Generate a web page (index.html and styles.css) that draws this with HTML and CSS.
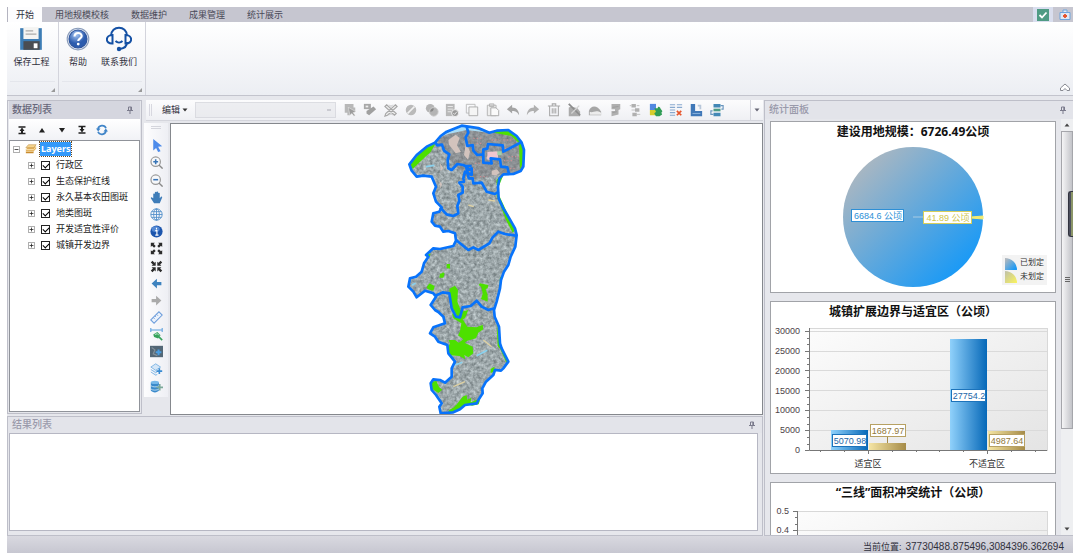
FILE: index.html
```html
<!DOCTYPE html>
<html lang="zh-CN">
<head>
<meta charset="utf-8">
<title>用地规模校核</title>
<link rel="stylesheet" href="styles.css">
</head>
<body>
<div class="app">
  <header class="ribbon">
    <nav class="tabs">
      <button class="tab tab-active">开始</button>
      <button class="tab">用地规模校核</button>
      <button class="tab">数据维护</button>
      <button class="tab">成果管理</button>
      <button class="tab">统计展示</button>
      <span class="spacer"></span>
      <button class="tab-icon tab-icon-on" aria-label="确认"><svg viewBox="0 0 12 12"><rect width="12" height="12" fill="#4f9b84"/><path d="M2.500 6l2.500 2.500 4.500-5" fill="none" stroke="#fff" stroke-width="1.800"/></svg></button>
      <button class="tab-icon" aria-label="工具箱"><svg viewBox="0 0 12 12"><path d="M1 3.500h10v7H1zM4 3.500V1h4v2.500" fill="#dfe8f4" stroke="#6fa5dc"/><path d="M6 5v4M4 7h4" stroke="#e4532d" stroke-width="1.800"/></svg></button>
    </nav>
    <div class="ribbon-body">
      <section class="group">
        <div class="group-items">
          <button class="big"><svg viewBox="0 0 24 24"><path d="M2 2h20v20H2z" fill="#3d7db5"/><path d="M5 1h14v11H5z" fill="#f4f4f2"/><path d="M7 4.500h7M7 7.500h10" stroke="#aaa"/><path d="M5 14h15v8H5z" fill="#4a4d52"/><path d="M14.500 16h3.500v4.500h-3.500z" fill="#fff"/></svg>保存工程</button>
        </div>
        <div class="group-foot"></div>
      </section>
      <section class="group">
        <div class="group-items">
          <button class="big"><svg viewBox="0 0 24 24"><defs><radialGradient id="help" cx=".4" cy=".25"><stop offset="0" stop-color="#a9c8f4"/><stop offset="1" stop-color="#2c5cae"/></radialGradient></defs><circle cx="12" cy="12" r="10" fill="#e3e9f4" stroke="#8a9cba"/><circle cx="12" cy="12" r="8.300" fill="url(#help)" stroke="#2b529b"/><path d="M8.800 9.800c0-4.500 6.600-4.300 6.600-.5 0 2.300-3.200 2.400-3.200 4.500" fill="none" stroke="#fff" stroke-width="2"/><circle cx="12.200" cy="16.700" r="1.300" fill="#fff"/></svg>帮助</button>
          <button class="big"><svg viewBox="0 0 26 26"><path d="M5 10c0-11 16-11 16 0M21 16c0 4-3 6.500-7 7M9.500 15c2 2 5 2 7 0" fill="none" stroke="#1450a4" stroke-width="2"/><path d="M6.500 9v8.500C-1 18-1 9 6.500 9zM19.500 9v8.500c7.500.5 7.500-8.500 0-8.500z" fill="none" stroke="#1450a4" stroke-width="2"/><circle cx="13" cy="23" r="2.200" fill="#1450a4"/></svg>联系我们</button>
        </div>
        <div class="group-foot"></div>
      </section>
      <button class="collapse" aria-label="折叠"><svg viewBox="0 0 12 10"><path d="M1.500 6L6 2l4.500 4v2.500H8L6 6.500 4 8.500H1.500z" fill="#fff" stroke="#888a92"/></svg></button>
    </div>
  </header>

  <main class="work">
    <div class="left-area">
      <section class="panel data-panel">
        <header class="panel-head strong"><h2>数据列表</h2><button class="pin" aria-label="固定"><svg viewBox="0 0 8 8"><path d="M2.500 1h3v3.500h-3zM1 4.500h6M4 5v3" fill="none" stroke="#7b7b8c"/><path d="M4.800 1v3.500" stroke="#7b7b8c"/></svg></button></header>
        <div class="tree-tools">
          <button aria-label="置顶"><svg viewBox="0 0 12 12"><path d="M2.500 3h7M2.500 9.500h7" stroke="#222" stroke-width="1.300"/><path d="M6 3.500l2.500 3.500H7v2H5V7H3.500z" fill="#222"/></svg></button>
          <button aria-label="上移"><svg viewBox="0 0 12 12"><path d="M6 4L9 8.500H3z" fill="#222"/></svg></button>
          <button aria-label="下移"><svg viewBox="0 0 12 12"><path d="M6 8.500L3 4h6z" fill="#222"/></svg></button>
          <button aria-label="置底"><svg viewBox="0 0 12 12"><path d="M2.500 2.500h7M2.500 9h7" stroke="#222" stroke-width="1.300"/><path d="M6 8.500L8.500 5H7V3H5v2H3.500z" fill="#222"/></svg></button>
          <button aria-label="刷新"><svg viewBox="0 0 12 12"><path d="M2 5c.8-4 6.500-4.500 8-.8M10 7c-.8 4-6.500 4.500-8 .8" fill="none" stroke="#3f84c8" stroke-width="1.700"/><path d="M0 4.500h4.500L2.200 7.500zM12 7.500H7.500L9.800 4.500z" fill="#3f84c8"/></svg></button>
        </div>
        <ul class="tree">
          <li class="node root"><button class="toggle" aria-label="收起"><svg viewBox="0 0 9 9"><path d="M.5.5h8v8h-8z" fill="#fff" stroke="#8b8b8b"/><path d="M2 4.500h5" stroke="#222"/></svg></button><svg class="layers" viewBox="0 0 14 12"><path d="M1 9l3-3.500h9L10 9v2H1z" fill="#c98b2f"/><path d="M1 6.500L4 3h9v2l-3 3.500H1z" fill="#e4b25c"/><path d="M1 4.500L4 1h9L10 4.500z" fill="#f6d58e" stroke="#b98739" stroke-width=".6"/><path d="M1 6.600h9l3-3.300M1 8.800h9l3-3.300" stroke="#fff3d2" stroke-width=".7" fill="none"/></svg><span class="selected">Layers</span></li>
          <li class="node"><button class="toggle" aria-label="展开"><svg viewBox="0 0 9 9"><path d="M.5.5h8v8h-8z" fill="#fff" stroke="#8b8b8b"/><path d="M2 4.500h5M4.500 2v5" stroke="#222"/></svg></button><label><input type="checkbox" checked>行政区</label></li>
          <li class="node"><button class="toggle" aria-label="展开"><svg viewBox="0 0 9 9"><path d="M.5.5h8v8h-8z" fill="#fff" stroke="#8b8b8b"/><path d="M2 4.500h5M4.500 2v5" stroke="#222"/></svg></button><label><input type="checkbox" checked>生态保护红线</label></li>
          <li class="node"><button class="toggle" aria-label="展开"><svg viewBox="0 0 9 9"><path d="M.5.5h8v8h-8z" fill="#fff" stroke="#8b8b8b"/><path d="M2 4.500h5M4.500 2v5" stroke="#222"/></svg></button><label><input type="checkbox" checked>永久基本农田图斑</label></li>
          <li class="node"><button class="toggle" aria-label="展开"><svg viewBox="0 0 9 9"><path d="M.5.5h8v8h-8z" fill="#fff" stroke="#8b8b8b"/><path d="M2 4.500h5M4.500 2v5" stroke="#222"/></svg></button><label><input type="checkbox" checked>地类图斑</label></li>
          <li class="node"><button class="toggle" aria-label="展开"><svg viewBox="0 0 9 9"><path d="M.5.5h8v8h-8z" fill="#fff" stroke="#8b8b8b"/><path d="M2 4.500h5M4.500 2v5" stroke="#222"/></svg></button><label><input type="checkbox" checked>开发适宜性评价</label></li>
          <li class="node"><button class="toggle" aria-label="展开"><svg viewBox="0 0 9 9"><path d="M.5.5h8v8h-8z" fill="#fff" stroke="#8b8b8b"/><path d="M2 4.500h5M4.500 2v5" stroke="#222"/></svg></button><label><input type="checkbox" checked>城镇开发边界</label></li>
        </ul>
      </section>

      <section class="editor">
        <div class="edit-bar">
          <span class="grip-v"></span>
          <button class="edit-menu">编辑<svg viewBox="0 0 6 4"><path d="M.5.5h5L3 3.500z" fill="#333"/></svg></button>
          <select class="target" disabled aria-label="编辑图层"><option></option></select>
          <div class="edit-icons">
            <button aria-label="选择"><svg viewBox="0 0 16 16"><path d="M2 1h10v4h2v5H8v4H5v-3H2z" fill="#b8b8b8"/><path d="M6 5l9 5-3.500 1 2.500 3-1.500 1-2.300-3L8 14z" fill="#9c9c9c" stroke="#f5f5f5" stroke-width=".5"/></svg></button>
            <button aria-label="标注"><svg viewBox="0 0 16 16"><path d="M1 1h8v6H1z" fill="#a8a8a8"/><path d="M3 3h3v2H3z" fill="#eee"/><path d="M4 9l8-5 3 3-8 7-3-2z" fill="#a0a0a0"/></svg></button>
            <button aria-label="编辑工具"><svg viewBox="0 0 16 16"><path d="M3 2l11 10-2 2L1 4zM13 2l2 2L4 14l-3 1 1-3z" fill="#eee" stroke="#a8a8a8" stroke-width="1.300"/><path d="M6 2l2 2 2-2M6 14l2-2 2 2" fill="none" stroke="#b4b4b4"/></svg></button>
            <button aria-label="裁剪"><svg viewBox="0 0 16 16"><circle cx="8" cy="8" r="6" fill="#bababa"/><path d="M4 12l8-8" stroke="#f2f2f2" stroke-width="2"/></svg></button>
            <button aria-label="合并"><svg viewBox="0 0 16 16"><circle cx="6" cy="6" r="5" fill="#b4b4b4"/><circle cx="10" cy="10" r="5" fill="#b4b4b4" stroke="#ccc"/><path d="M6 10a4 4 0 0 1 4-4 4 4 0 0 1-4 4z" fill="#888"/></svg></button>
            <button aria-label="属性"><svg viewBox="0 0 16 16"><path d="M1 1h10v14H1z" fill="#b8b8b8"/><path d="M3 4h6M3 7h6M3 10h4" stroke="#eee"/><circle cx="11.500" cy="11.500" r="4" fill="#999" stroke="#f3f3f3"/><path d="M9.500 11.500l1.500 1.500 2.500-3" fill="none" stroke="#eee"/></svg></button>
            <button aria-label="复制"><svg viewBox="0 0 16 16"><path d="M1.500 1.500h10v10h-10z" fill="none" stroke="#b8b8b8"/><path d="M4.500 4.500h10v10h-10z" fill="#f5f5f5" stroke="#a8a8a8"/></svg></button>
            <button aria-label="粘贴"><svg viewBox="0 0 16 16"><path d="M1.500 2.500h10v12h-10zM4 1h5v3H4z" fill="#eee" stroke="#b0b0b0"/><path d="M5.500 5.500h6l3 3v6h-9z" fill="#fafafa" stroke="#a4a4a4"/></svg></button>
            <button aria-label="撤销"><svg viewBox="0 0 16 16"><path d="M1 7l6-5v3c5 0 8 4 8 9-2-4-4-5-8-5v3z" fill="#a4a4a4"/></svg></button>
            <button aria-label="重做"><svg viewBox="0 0 16 16"><path d="M15 7L9 2v3c-5 0-8 4-8 9 2-4 4-5 8-5v3z" fill="#b0b0b0"/></svg></button>
            <button aria-label="删除"><svg viewBox="0 0 16 16"><path d="M1 3.500h14M6 3V1h4v2M3 4v10.500h10V4M6 6v6M8 6v6M10 6v6" fill="none" stroke="#a8a8a8" stroke-width="1.200"/></svg></button>
            <button aria-label="停止编辑"><svg viewBox="0 0 16 16"><path d="M2 15V5l3-1 7 2 3 4v5z" fill="#ababab"/><path d="M2 1l13 13" stroke="#8d8d8d" stroke-width="2"/><path d="M14 3L5 12" stroke="#d4d4d4" stroke-width="1.500"/></svg></button>
            <button aria-label="分割"><svg viewBox="0 0 16 16"><path d="M1 9c2-7 10-7 14 1v4H1z" fill="#a6a6a6"/><path d="M2 10c4 2 6-3 13 1v2.500H2z" fill="#ececec"/></svg></button>
            <button aria-label="修整"><svg viewBox="0 0 16 16"><path d="M4 1h10v6l-2 1v5l-8 2V9h4V7H4z" fill="#b0b0b0"/><path d="M5 5l7-1M5 11l5-1" stroke="#999"/></svg></button>
            <button aria-label="拓扑"><svg viewBox="0 0 16 16"><path d="M4 1h5v4H4zM8 6h5v4H8zM5 11h5v4H5z" fill="#b0b0b0"/><path d="M2 3h2M4 8h4M10 3h3M10 13h4" stroke="#bbb"/></svg></button>
            <button aria-label="图斑"><svg viewBox="0 0 16 16"><path d="M1 1h7v7H1z" fill="#5288e0"/><path d="M1 8h7v6H1z" fill="#d7cd2c"/><path d="M6 6h4c0-3 3-1 3 0 0 1 3 3 2 4s-1 1 0 3l-3 2H8l-2-3 2-2z" fill="#2f9c55"/></svg></button>
            <button aria-label="清除列表"><svg viewBox="0 0 16 16"><path d="M1 2h6M9 2h6M1 5h6M9 5h6M1 8h6M1 11h6M1 14h6" stroke="#88a9cf" stroke-width="1.300"/><path d="M9 9l5 5M14 9l-5 5" stroke="#e6552b" stroke-width="2"/></svg></button>
            <button aria-label="形状"><svg viewBox="0 0 16 16"><path d="M2 1h5v8h8v6H2z" fill="#4078b8"/><path d="M10 3h3v4" fill="none" stroke="#b8c7da" stroke-width="2"/><path d="M4 12h9" stroke="#8db5df"/></svg></button>
            <button aria-label="同步"><svg viewBox="0 0 16 16"><path d="M4 1h8v4H4zM4 11h8v4H4z" fill="#4388b6"/><path d="M4 6.500h8v3H4z" fill="#4c9b85"/><path d="M12 3h3v4h-2M4 13H1V9h2" fill="none" stroke="#6895be" stroke-width="1.300"/></svg></button>
          </div>
          <span class="spacer"></span>
          <button class="overflow" aria-label="更多"><svg viewBox="0 0 6 4"><path d="M.5.5h5L3 3.500z" fill="#666674"/></svg></button>
        </div>
        <div class="map-row">
          <div class="map-tools">
            <span class="grip-h"></span>
            <button aria-label="选择要素"><svg viewBox="0 0 16 16"><path d="M4 0l11 9-5 .5 3 5.500-3 1-2.500-5L4 14z" fill="#4d8bea"/></svg></button>
            <button aria-label="放大"><svg viewBox="0 0 16 16"><circle cx="7" cy="7" r="5.800" fill="#f7f8fa" stroke="#999" stroke-width="1.500"/><path d="M11 11l4.500 4.500" stroke="#888" stroke-width="1.700"/><path d="M4 7h6M7 4v6" stroke="#3975b7" stroke-width="1.900"/></svg></button>
            <button aria-label="缩小"><svg viewBox="0 0 16 16"><circle cx="7" cy="7" r="5.800" fill="#f7f8fa" stroke="#999" stroke-width="1.500"/><path d="M11 11l4.500 4.500" stroke="#888" stroke-width="1.700"/><path d="M4 7h6" stroke="#3975b7" stroke-width="1.900"/></svg></button>
            <button aria-label="平移"><svg viewBox="0 0 16 16"><path d="M4 9V3.500q1-1 2 0V1.500q1-1 2 0v-.5q1-1 2 0v1.500q1-1 2 0V9l1.500-2q1.500-.5 1.500 1L12 15H5L1 9q0-2 1.500-1z" fill="#3f7db9"/></svg></button>
            <button aria-label="全图"><svg viewBox="0 0 16 16"><g fill="none" stroke="#5390ca" stroke-width="1.100"><circle cx="8" cy="8" r="7"/><ellipse cx="8" cy="8" rx="3.500" ry="7"/><path d="M8 1v14M1 8h14M2 4.500h12M2 11.500h12"/></g></svg></button>
            <button aria-label="信息"><svg viewBox="0 0 16 16"><circle cx="8" cy="8" r="7.500" fill="#1c55ad"/><ellipse cx="7" cy="5" rx="5" ry="3.500" fill="#6c9fe4" opacity=".7"/><path d="M6.500 7H8.500v5M6.500 12.500h4M8 3.500v2" stroke="#fff" stroke-width="1.400" fill="none"/></svg></button>
            <button aria-label="固定放大"><svg viewBox="0 0 16 16"><path d="M1 1h5L4.500 2.500 7 5 5 7 2.500 4.500 1 6zM15 1v5l-1.500-1.500L11 7 9 5l2.500-2.500L10 1zM1 15v-5l1.500 1.500L5 9l2 2-2.500 2.500L6 15zM15 15h-5l1.500-1.500L9 11l2-2 2.500 2.500L15 10z" fill="#2b2b2b"/></svg></button>
            <button aria-label="固定缩小"><svg viewBox="0 0 16 16"><path d="M7 7H2l1.500-1.500L1 3l2-2 2.500 2.500L7 2zM9 7V2l1.500 1.500L13 1l2 2-2.500 2.500L14 7zM7 9v5l-1.500-1.500L3 15l-2-2 2.500-2.500L2 9zM9 9h5l-1.500 1.500L15 13l-2 2-2.500-2.500L9 14z" fill="#2b2b2b"/></svg></button>
            <button aria-label="上一视图"><svg viewBox="0 0 16 16"><path d="M2 8l6.500-6v4H14v4H8.500v4z" fill="#3e83bf"/></svg></button>
            <button aria-label="下一视图"><svg viewBox="0 0 16 16"><path d="M14 8L7.500 2v4H2v4h5.500v4z" fill="#aaa"/></svg></button>
            <button aria-label="测量"><svg viewBox="0 0 16 16"><path d="M1 11L11 1l4 4L5 15z" fill="#eef4fc" stroke="#6f9fdc" stroke-width="1.300"/><path d="M4 8l2 2M6 6l1.500 1.500M8 4l2 2" stroke="#6f9fdc"/></svg></button>
            <button aria-label="面积测量"><svg viewBox="0 0 16 16"><path d="M1 2.500h14M1 0v5M15 0v5" stroke="#5b9fdd" stroke-width="1.300"/><path d="M4 8l5-3 4 4-3 4-5-2z" fill="#36a35b"/><path d="M6 8l3-1 2 2" stroke="#dff3e5" fill="none"/><path d="M11 11l4 4" stroke="#36a35b" stroke-width="2"/></svg></button>
            <button aria-label="影像"><svg viewBox="0 0 16 16"><path d="M0 1h16v14H0z" fill="#536776"/><path d="M2 3l4 3-2 5 5 2" fill="none" stroke="#82909a" stroke-width="1.500"/><path d="M7 9h7M10.500 5.500v7" stroke="#4b9de0" stroke-width="2.500"/></svg></button>
            <button aria-label="添加图层"><svg viewBox="0 0 16 16"><path d="M1 5l6-4 6 4-6 4zM1 8l6 4 3-2M1 11l6 4 2-1" fill="#d4e6f7" stroke="#73aee2"/><path d="M8 10h7M11.500 6.500v7" stroke="#398bd2" stroke-width="2"/></svg></button>
            <button aria-label="添加数据库"><svg viewBox="0 0 16 16"><path d="M1 3v10c2 3 8 3 10 0V3z" fill="#3a8acb"/><ellipse cx="6" cy="3" rx="5" ry="2" fill="#77b8e9"/><path d="M1 7c2 2 8 2 10 0M1 11c2 2 8 2 10 0" fill="none" stroke="#d2e8f8"/><path d="M8 9h8M12 5v8" stroke="#7da99a" stroke-width="2"/></svg></button>
          </div>
          <div class="map-view">
            <svg class="map" viewBox="-687 12 1773 870" role="img" aria-label="地图">
              <defs>
                <path id="region" d="M28 133L50 105 80 80 105 68 122 48 140 35 185 17 205 20 235 24 268 38 290 32 325 30 350 48 365 68 372 90 370 140 362 153 340 162 310 163 298 175 294 200 296 235 310 265 328 295 345 325 350 345 346 380 332 410 325 435 312 455 303 480 300 505 290 545 282 570 284 590 297 620 300 670 305 685 325 725 310 745 303 752 285 750 280 765 258 785 247 805 248 820 235 840 230 850 195 855 180 868 160 877 122 880 118 860 125 850 108 825 95 810 92 790 100 778 120 780 135 788 155 770 155 745 165 725 145 700 142 675 115 665 105 650 90 640 100 622 135 610 130 590 115 576 105 570 92 555 108 530 100 520 75 512 50 532 40 515 25 500 30 475 48 470 65 455 72 430 85 410 78 405 100 385 120 387 160 378 168 362 165 340 145 333 130 335 120 320 105 317 95 305 100 280 118 275 125 262 108 245 100 220 108 200 95 170 70 167 50 170 35 152Z"/>
                <clipPath id="inside"><use href="#region"/></clipPath>
                <filter id="terrain" x="0" y="0" width="1" height="1" color-interpolation-filters="sRGB"><feTurbulence type="fractalNoise" baseFrequency=".1" numOctaves="3" seed="8"/><feColorMatrix values=".45 .1 0 0 .34  .45 .1 0 0 .38  .45 .1 0 0 .39  0 0 0 0 1"/></filter>
              </defs>
              <g clip-path="url(#inside)">
                <rect x="10" y="10" width="370" height="880" filter="url(#terrain)"/>
                <path d="M190 10L380 20V165H300L210 180 150 120 110 60z" fill="#79777c" opacity=".45"/>
                <path d="M120 50L185 17 268 38 200 30 145 42z" fill="#a9dcf5"/>
                <path d="M145 60l22-16 12 10-8 22 12 20-16 4-20-26zM198 65l12 30-6 24-12-14zM270 98l20-5 2 20-18 8-16-6zM275 152l16-4 8 10-10 8-14-2zM120 130l10 14-8 10zM118 182l8 10-4 14z" fill="#d2c3bd"/>
                <path d="M262 95h32v24h-32z" fill="#f1c6cf"/><path d="M292 94h13v12h-13z" fill="#a0cfaa"/>
                <path d="M220 55h30M230 70h14M310 60h25M305 85h40M325 110h38M312 122h30M225 130h16M240 170h22M320 145h24M275 60h22M210 150h20" stroke="#c89094" stroke-width="4" stroke-dasharray="4 6"/>
                <path d="M230 707l32-16M78 140l25-4M35 495l12-5M165 735l22-8" stroke="#89d2ef" stroke-width="5"/>
                <path d="M250 660l25 20M160 800l35-15M205 255l16 5M265 240l20 3" stroke="#dfd1a2" stroke-width="4"/>
              </g>
              <g class="green">
                <path d="M30 132L75 85 106 72 92 96 70 116 38 147z"/>
                <path d="M268 36L325 32 352 52 368 80 369 125 360 150 357 70 335 48z"/>
                <path d="M290 180L300 167 310 166 298 195 290 196zM288 222L300 232 346 330 338 338 318 300z"/>
                <path d="M78 405l14-4-4 10zM140 432l10 0 0 14-10-2zM128 455l6 6-4 12-12 0 2-12 8-2zM88 490l16 8-4 14-16-4-4-6z"/>
                <path d="M148 506L165 497 174 510 172 545 184 575 205 570 195 595 188 598 202 620 230 622 248 614 250 628 235 638 228 655 202 662 194 668 218 680 220 700 205 712 193 705 196 718 178 708 150 706 142 686 150 670 146 660 165 660 176 668 190 658 174 646 180 634 184 610 160 595 156 580 172 590 156 560 150 530z"/>
                <path d="M240 490l25 5-2 10-6 2 6 18 0 20-20-8 5-16-4-20-8-6zM95 785l14-2 8 18 10 8-12 10-18-12zM148 870l14-8 12-14 14-18 12-5 2 14 12-6-2 14 18-8 10 2-4 12-20 4-18-6-18 15-18 10-18 2zM272 746l12-6-2 14-10 6zM300 470l6 4-8 35zM290 610l8 60 25 50-4 8-18-40-8-10z"/>
              </g>
              <g class="bounds">
                <use href="#region"/>
                <path d="M106 68L112 76 126 74 132 92 148 103 143 120 145 145 155 150 172 132 190 135 202 142 205 150 215 145V165L195 155 190 175 192 185 178 188 188 200V218L175 225 178 242 172 258 175 280 160 288 140 283 120 262"/>
                <path d="M200 20L205 38 197 52 202 78 218 75 220 92 232 105 250 103V128L275 130 272 115 300 118 303 140 322 142 327 162M250 103V88L262 86 264 72 308 76 310 95 365 66"/>
                <path d="M215 138H198L206 175H218L220 190 245 188 260 215 285 222 296 215"/>
                <path d="M168 360L205 390 220 382 235 390 268 370 278 352 295 335 315 342 347 347"/>
                <path d="M105 528L128 517 148 520 155 565 168 590 180 592 188 562 212 558 230 542 245 560 265 570 282 565"/>
              </g>
            </svg>
          </div>
        </div>
      </section>

      <section class="panel result-panel">
        <header class="panel-head"><h2>结果列表</h2><button class="pin" aria-label="固定"><svg viewBox="0 0 8 8"><path d="M2.500 1h3v3.500h-3zM1 4.500h6M4 5v3" fill="none" stroke="#7b7b8c"/><path d="M4.800 1v3.500" stroke="#7b7b8c"/></svg></button></header>
        <div class="results"></div>
      </section>
    </div>

    <section class="panel stats-panel">
      <header class="panel-head"><h2>统计面板</h2><button class="pin" aria-label="固定"><svg viewBox="0 0 8 8"><path d="M2.500 1h3v3.500h-3zM1 4.500h6M4 5v3" fill="none" stroke="#7b7b8c"/><path d="M4.800 1v3.500" stroke="#7b7b8c"/></svg></button></header>
      <div class="stats-body">
        <div class="charts">
          <article class="chart">
            <h3>建设用地规模：6726.49公顷</h3>
            <svg viewBox="0 0 284 150">
              <defs>
                <linearGradient id="pie" x1="0" y1="0" x2="1" y2="1"><stop offset=".1" stop-color="#b0b8bf"/><stop offset=".85" stop-color="#1c9af5"/></linearGradient>
                <linearGradient id="pale" x1="0" y1="0" x2="1" y2="1"><stop offset="0" stop-color="#bfc0aa"/><stop offset="1" stop-color="#fbf45c"/></linearGradient>
              </defs>
              <circle cx="142" cy="75" r="70" fill="url(#pie)"/>
              <path d="M142 75H153" stroke="#a9cbe2"/><path d="M200 75l12-1v3l-12-1z" fill="#f3ec72" stroke="#f3ec72"/>
              <rect x="80.500" y="67.500" width="52" height="12" fill="#fff" stroke="#2d8fd6"/><text class="val blue" x="107" y="77">6684.6 公顷</text>
              <rect x="152.500" y="69.500" width="48" height="12" fill="#fff" stroke="#d6cf5b"/><text class="val yellow" x="177" y="79">41.89 公顷</text>
              <rect x="231" y="113" width="45" height="30" fill="#f3f3f3"/>
              <path d="M234 116a12 12 0 0 1 12 12h-12z" fill="url(#pie)"/><path d="M234 129a12 12 0 0 1 12 12h-12z" fill="url(#pale)"/>
              <text class="legend" x="249" y="123">已划定</text><text class="legend" x="249" y="137">未划定</text>
            </svg>
          </article>
          <article class="chart">
            <h3>城镇扩展边界与适宜区（公顷）</h3>
            <svg viewBox="0 0 284 151">
              <defs>
                <linearGradient id="plot" x1="0" y1="0" x2="1" y2="1"><stop offset="0" stop-color="#fcfcfc"/><stop offset="1" stop-color="#e4e4e4"/></linearGradient>
                <linearGradient id="blue"><stop offset="0" stop-color="#90d1fb"/><stop offset="1" stop-color="#0668b8"/></linearGradient>
                <linearGradient id="gold"><stop offset="0" stop-color="#f5e5a4"/><stop offset="1" stop-color="#a58b48"/></linearGradient>
              </defs>
              <rect x="38.500" y="6.500" width="238" height="122" fill="url(#plot)" stroke="#d8d8d8"/>
              <path d="M38 9.500H276M38 29.500H276M38 48.500H276M38 68.500H276M38 88.500H276M38 108.500H276" stroke="#dadada"/>
              <path d="M38.500 6V128.500H276M34 9.500h4M34 29.500h4M34 48.500h4M34 68.500h4M34 88.500h4M34 108.500h4M34 128.500h4M97.500 128v4M216.500 128v4" fill="none" stroke="#777"/>
              <path d="M36 16.500h2M36 22.500h2M36 36.500h2M36 42.500h2M36 55.500h2M36 62.500h2M36 75.500h2M36 82.500h2M36 95.500h2M36 102.500h2M36 115.500h2M36 122.500h2M49.500 128v2M73.500 128v2M121.500 128v2M145.500 128v2M168.500 128v2M192.500 128v2M240.500 128v2M264.500 128v2" stroke="#777"/>
              <g class="tick"><text x="29" y="12">30000</text><text x="29" y="32">25000</text><text x="29" y="52">20000</text><text x="29" y="72">15000</text><text x="29" y="91">10000</text><text x="29" y="111">5000</text><text x="29" y="131">0</text></g>
              <rect x="60" y="108" width="37" height="20" fill="url(#blue)"/><rect x="98" y="121" width="37" height="7" fill="url(#gold)"/>
              <rect x="179" y="17" width="37" height="111" fill="url(#blue)"/><rect x="217" y="109" width="37" height="19" fill="url(#gold)"/>
              <path d="M116.500 114v7" stroke="#a58b48"/>
              <g fill="#fff"><rect x="61.500" y="112.500" width="34" height="12" stroke="#1c73bb"/><rect x="99.500" y="102.500" width="35" height="12" stroke="#b7a163"/><rect x="180.500" y="67.500" width="34" height="12" stroke="#1c73bb"/><rect x="218.500" y="112.500" width="35" height="12" stroke="#b7a163"/></g>
              <text class="val navy" x="79" y="122">5070.98</text><text class="val gold" x="117" y="112">1687.97</text><text class="val navy" x="198" y="77">27754.2</text><text class="val gold" x="236" y="122">4987.64</text>
              <text class="cat" x="97" y="145">适宜区</text><text class="cat" x="216" y="145">不适宜区</text>
            </svg>
          </article>
          <article class="chart">
            <h3>“三线”面积冲突统计（公顷）</h3>
            <svg viewBox="0 0 284 151">
              <rect x="26.500" y="8.500" width="250" height="120" fill="url(#plot)" stroke="#d8d8d8"/>
              <path d="M26 27.500H276" stroke="#dadada"/>
              <path d="M26.500 8V128M22 8.500h4M22 27.500h4M24 14.500h2M24 21.500h2" stroke="#777"/>
              <g class="tick"><text x="18" y="11">0.5</text><text x="18" y="30">0.4</text></g>
            </svg>
          </article>
        </div>
        <div class="scrollbar">
          <button aria-label="向上"><svg viewBox="0 0 6 4"><path d="M.5 3.500h5L3 .5z" fill="#444"/></svg></button>
          <div class="track"><div class="thumb"><i></i><i></i><i></i></div></div>
          <button aria-label="向下"><svg viewBox="0 0 6 4"><path d="M.5.5h5L3 3.500z" fill="#444"/></svg></button>
        </div>
      </div>
      <div class="side-handle"></div>
    </section>
  </main>

  <footer class="status"><span class="status-label">当前位置:</span><span>37730488.875496,3084396.362694</span></footer>
</div>
</body>
</html>
```

FILE: styles.css
```css
* { box-sizing: border-box; }
body {
  margin: 0;
  background: #fff;
  color: #30303c;
  font-family: "Liberation Sans", "Noto Sans CJK SC", sans-serif;
  font-size: 9px;
  line-height: 12px;
}
button {
  margin: 0;
  padding: 0;
  border: 0;
  background: none;
  color: inherit;
  font: inherit;
}
h2, h3, ul { margin: 0; padding: 0; }
svg { display: block; }
.spacer { flex: 1; }

.app {
  display: flex;
  flex-direction: column;
  height: 100vh;
  padding: 7px 7px 5px;
}

/* ribbon */
.tabs {
  display: flex;
  align-items: stretch;
  height: 15px;
  background: #c6c6d0;
  color: #4a4a58;
}
.tab { margin-right: 4px; padding: 0 9px; }
.tab-active { padding: 0 8px; background: #fdfdfe; color: #30303c; border-left: 1px solid #b4b4c0; }
.tab-icon { display: flex; align-items: center; padding: 0 4px; }
.tab-icon-on { margin-right: 4px; background: #d9deee; }
.tab-icon:last-child { padding: 0 2px; }
.tab-icon svg { width: 12px; height: 12px; }
.ribbon-body {
  display: flex;
  height: 73px;
  background: linear-gradient(#fff, #eceef3);
}
.group {
  display: flex;
  flex-direction: column;
  min-width: 52px;
  padding: 0 3px;
  border-right: 1px solid #d3d4dc;
}
.group-items { display: flex; flex: 1; gap: 10px; padding: 4px 2px 0; }
.big { display: flex; flex-direction: column; align-items: center; gap: 4px; min-width: 26px; align-self: flex-start; }
.big svg { width: 26px; height: 26px; }
.group:first-child .group-items { padding-left: 0; justify-content: center; }
.group:nth-child(2) .group-items { padding: 4px 5px 0 3px; }
.group-foot {
  display: flex;
  align-items: flex-end;
  justify-content: flex-end;
  height: 14px;
  padding: 3px 0;
  border-top: 1px solid #e4e6ec;
}
.group-foot::after { content: ""; border: 2px solid; border-color: transparent #999 #999 transparent; }
.collapse { align-self: flex-end; margin: 0 2px 3px auto; }
.collapse svg { width: 12px; height: 10px; }

/* workspace */
.work {
  display: grid;
  grid-template-columns: minmax(0, 1fr) 309px;
  gap: 1px;
  flex: 1;
  min-height: 0;
  padding-top: 4px;
  border-top: 1px solid #c3c4cd;
  background: #e6e7ec;
}
.left-area {
  display: grid;
  grid-template-columns: 135px minmax(0, 1fr);
  grid-template-rows: minmax(0, 1fr) 120px;
  column-gap: 2px;
  row-gap: 1px;
  min-height: 0;
}
.panel {
  display: flex;
  flex-direction: column;
  min-height: 0;
  border: 1px solid #bebfc9;
  background: #e6e7ec;
}
.panel-head {
  display: flex;
  align-items: center;
  justify-content: space-between;
  height: 16px;
  flex: none;
  padding: 0 6px 0 4px;
  color: #9a9aab;
  background: #e3e4ea;
}
.panel-head.strong { background: #d5d6df; color: #67677a; }
.panel-head h2 { font-size: 10px; font-weight: 500; }
.pin svg { width: 8px; height: 8px; }

/* layer tree */
.data-panel { margin-bottom: 1px; padding: 0 1px 1px; }
.data-panel .panel-head { height: 18px; padding-left: 3px; }
.tree-tools {
  display: flex;
  align-items: center;
  gap: 8px;
  height: 21px;
  padding-left: 7px;
  background: linear-gradient(#fff, #f1f2f6);
}
.tree-tools svg { width: 12px; height: 12px; }
.tree {
  flex: 1;
  min-height: 0;
  border: 1px solid #90939a;
  background: #fff;
  list-style: none;
  color: #222;
}
.node { display: flex; align-items: center; height: 16px; padding-left: 18px; }
.node.root { padding-left: 3px; gap: 5px; }
.toggle svg { width: 7px; height: 7px; }
.node label { display: flex; align-items: center; gap: 6px; margin-left: 6px; }
.node input {
  appearance: none;
  display: grid;
  place-items: center;
  width: 9px;
  height: 9px;
  margin: 0;
  border: 1px solid #222;
  background: #fff;
}
.node input:checked::after {
  content: "";
  width: 5px;
  height: 3px;
  border: solid #000;
  border-width: 0 0 1px 1px;
  transform: rotate(-45deg);
}
.layers { width: 12px; height: 12px; }
.selected {
  margin-left: -2px;
  padding: 1px;
  outline: 1px dotted #6b4a20;
  background: #3399fa;
  color: #fff;
  font-family: "Noto Sans", sans-serif;
  font-size: 9px;
  font-weight: 700;
}

/* map editor */
.editor { display: flex; flex-direction: column; min-width: 0; min-height: 0; }
.edit-bar {
  display: flex;
  align-items: center;
  height: 21px;
  flex: none;
  margin-left: 2px;
  padding-left: 3px;
  background: linear-gradient(#fcfcfd, #eff0f4);
  border-bottom: 1px solid #d4d5dc;
}
.grip-v { width: 3px; height: 12px; border: solid #d8d8e0; border-width: 0 1px; }
.edit-menu { display: flex; align-items: center; gap: 2px; margin: 0 7px 0 10px; }
.edit-menu svg, .overflow svg, .scrollbar svg { width: 6px; height: 4px; }
.target {
  width: 141px;
  height: 16px;
  margin-right: 7px;
  appearance: none;
  border: 1px solid #d0d1d8;
  background: linear-gradient(#b9bac2, #b9bac2) right 4px center / 4px 2px no-repeat #e8e9ed;
}
.edit-icons { display: flex; justify-content: space-between; flex: 0 1 381px; }
.edit-icons svg { width: 14px; height: 14px; }
.overflow { display: flex; align-items: center; justify-content: center; align-self: stretch; width: 13px; border-left: 1px solid #d4d5dc; }
.map-row { display: flex; flex: 1; min-height: 0; padding-top: 2px; }
.map-tools {
  display: flex;
  flex-direction: column;
  align-items: center;
  justify-content: space-between;
  width: 24px;
  height: 274px;
  margin-right: 2px;
  padding: 3px 0 4px;
  background: linear-gradient(90deg, #fdfdfe, #eeeff4);
}
.map-tools svg { width: 13px; height: 13px; }
.grip-h { width: 10px; height: 3px; margin-bottom: 6px; border: solid #d4d5dc; border-width: 1px 0; }
.map-view { flex: 1; min-width: 0; border: 1px solid #85888d; background: #fff; }
.map { width: 100%; height: 100%; }
.green { fill: #4de000; }
.bounds { fill: none; stroke: #0873fb; stroke-width: 8; stroke-linejoin: round; }

/* results */
.result-panel { grid-column: 1 / -1; }
.results { flex: 1; margin: 0 4px 4px 1px; border: 1px solid #b6b7c3; background: #fff; }

/* statistics */
.stats-panel { position: relative; border-right: 0; }
.stats-panel .panel-head { height: 18px; }
.stats-body { display: flex; flex: 1; min-height: 0; }
.charts {
  display: flex;
  flex-direction: column;
  gap: 8px;
  flex: 1;
  min-width: 0;
  overflow: hidden;
  padding: 2px 5px 0;
}
.chart { flex: none; border: 1px solid #a1a3a8; background: #fff; }
.chart h3 {
  height: 20px;
  color: #111;
  font-family: "Noto Sans", "Noto Sans CJK SC", sans-serif;
  font-size: 12px;
  font-weight: 700;
  line-height: 20px;
  text-align: center;
}
.chart svg { width: 100%; height: auto; }
.val { font-size: 9px; text-anchor: middle; }
.blue { fill: #2d8fd6; }
.yellow { fill: #cfc54a; }
.navy { fill: #1c66a8; }
.gold { fill: #8f783c; }
.legend { font-size: 8px; fill: #333; }
.tick { font-size: 9px; text-anchor: end; fill: #4c4348; }
.cat { font-size: 9px; text-anchor: middle; fill: #333; }
.scrollbar { display: flex; flex-direction: column; width: 12px; background: #eeeff1; }
.scrollbar button { display: grid; place-items: center; height: 12px; }
.track { flex: 1; }
.thumb {
  display: flex;
  flex-direction: column;
  align-items: center;
  justify-content: center;
  gap: 1px;
  height: 76%;
  border: 1px solid #a5a6ab;
  background: linear-gradient(90deg, #f5f5f6, #c3c4c9);
}
.thumb i { width: 5px; height: 1px; background: #666; }
.side-handle {
  position: absolute;
  top: 90px;
  right: 0;
  width: 5px;
  height: 46px;
  border: 1px solid #32343f;
  border-right: 0;
  border-radius: 3px 0 0 3px;
  background: linear-gradient(90deg, #4c4f5d 60%, #8b9568 60%);
}

.status {
  display: flex;
  align-items: center;
  justify-content: flex-end;
  gap: 4px;
  height: 17px;
  flex: none;
  padding: 4px 9px 0 0;
  background: linear-gradient(#d9d9e0, #c7c7d1);
  font-size: 10px;
}
.status-label { font-size: 9px; }
```
